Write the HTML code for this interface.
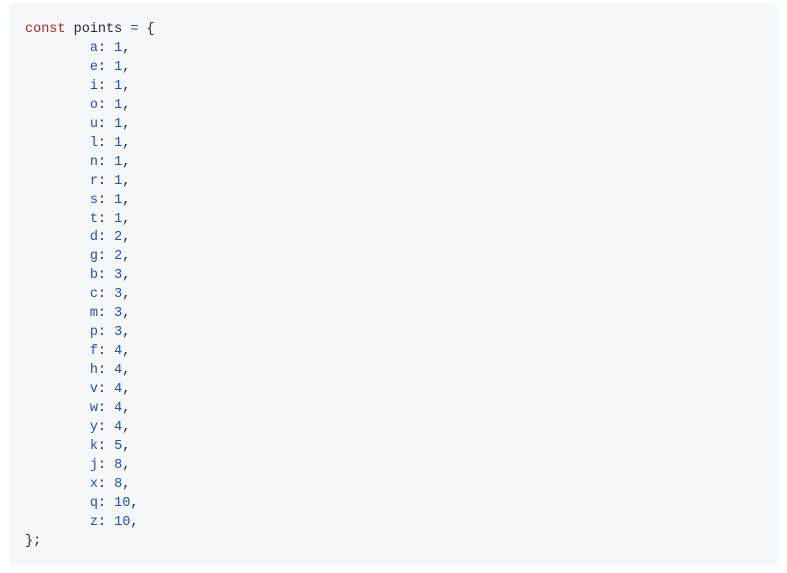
<!DOCTYPE html>
<html><head><style>
html,body{margin:0;padding:0;background:#fff;width:787px;height:573px;overflow:hidden}
.box{position:absolute;left:9px;top:3px;width:770px;height:563px;background:#f6f7f9;border-radius:6px}
pre{position:absolute;left:25px;top:21px;margin:0;font-family:"Liberation Mono",monospace;font-size:13.5px;line-height:18.96px;color:#24292e;tab-size:8}
.k{color:#b3262b}.b{color:#1d50c4}
</style></head><body>
<div class="box"></div>
<pre><span class="k">const</span> points <span class="b">=</span> {
	<span class="b">a</span>: <span class="b">1</span>,
	<span class="b">e</span>: <span class="b">1</span>,
	<span class="b">i</span>: <span class="b">1</span>,
	<span class="b">o</span>: <span class="b">1</span>,
	<span class="b">u</span>: <span class="b">1</span>,
	<span class="b">l</span>: <span class="b">1</span>,
	<span class="b">n</span>: <span class="b">1</span>,
	<span class="b">r</span>: <span class="b">1</span>,
	<span class="b">s</span>: <span class="b">1</span>,
	<span class="b">t</span>: <span class="b">1</span>,
	<span class="b">d</span>: <span class="b">2</span>,
	<span class="b">g</span>: <span class="b">2</span>,
	<span class="b">b</span>: <span class="b">3</span>,
	<span class="b">c</span>: <span class="b">3</span>,
	<span class="b">m</span>: <span class="b">3</span>,
	<span class="b">p</span>: <span class="b">3</span>,
	<span class="b">f</span>: <span class="b">4</span>,
	<span class="b">h</span>: <span class="b">4</span>,
	<span class="b">v</span>: <span class="b">4</span>,
	<span class="b">w</span>: <span class="b">4</span>,
	<span class="b">y</span>: <span class="b">4</span>,
	<span class="b">k</span>: <span class="b">5</span>,
	<span class="b">j</span>: <span class="b">8</span>,
	<span class="b">x</span>: <span class="b">8</span>,
	<span class="b">q</span>: <span class="b">10</span>,
	<span class="b">z</span>: <span class="b">10</span>,
};</pre>
</body></html>
